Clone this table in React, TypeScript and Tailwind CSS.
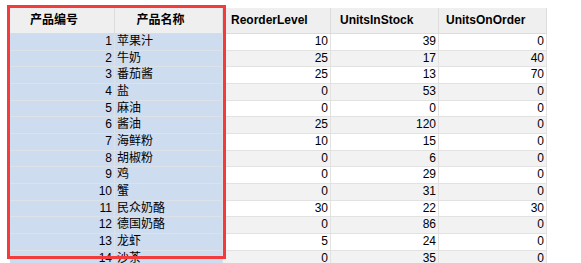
import React from "react";

const rows: [number, string, number, number, number][] = [
  [1, "苹果汁", 10, 39, 0],
  [2, "牛奶", 25, 17, 40],
  [3, "番茄酱", 25, 13, 70],
  [4, "盐", 0, 53, 0],
  [5, "麻油", 0, 0, 0],
  [6, "酱油", 25, 120, 0],
  [7, "海鲜粉", 10, 15, 0],
  [8, "胡椒粉", 0, 6, 0],
  [9, "鸡", 0, 29, 0],
  [10, "蟹", 0, 31, 0],
  [11, "民众奶酪", 30, 22, 30],
  [12, "德国奶酪", 0, 86, 0],
  [13, "龙虾", 5, 24, 0],
  [14, "沙茶", 0, 35, 0],
  [15, "味精", 0, 39, 0],
];

export default function App() {
  return (
    <div
      className="relative w-[581px] h-[263px] overflow-hidden bg-white text-[12px] text-black"
      style={{ fontFamily: '"Liberation Sans", "Noto Sans CJK SC", Arial, sans-serif' }}
    >
      <div className="pt-[8px] pl-[10px]">
        <div className="w-[537px]">
          <div className="flex h-[26px] bg-[#efefef] border-b border-[#dcdcdc] font-bold leading-[25px]">
            <div className="w-[105px] border-r border-[#dcdcdc] pr-[16px] text-center">产品编号</div>
            <div className="w-[108px] border-r border-[#dcdcdc] pr-[16px] text-center">产品名称</div>
            <div className="w-[108px] border-r border-[#dcdcdc] pl-[8px]">ReorderLevel</div>
            <div className="w-[108px] border-r border-[#dcdcdc] pl-[9px]">UnitsInStock</div>
            <div className="w-[108px] border-r border-[#dcdcdc] pl-[7px]">UnitsOnOrder</div>
          </div>
          {rows.map(([id, name, a, b, c]) => {
            const even = id % 2 === 0;
            const bg = even ? "bg-[#f2f2f2]" : "bg-white";
            return (
              <div key={id} className="flex h-[16.667px] leading-[15.6px]">
                <div className="w-[105px] bg-[#cedcef] border-r border-b border-[#dde1e8] pr-[2px] text-right">{id}</div>
                <div className="w-[108px] bg-[#cedcef] border-r border-b border-[#dde1e8] pl-[2px]">{name}</div>
                <div className={`w-[108px] ${bg} border-r border-b border-[#e2e2e2] pr-[2px] text-right`}>{a}</div>
                <div className={`w-[108px] ${bg} border-r border-b border-[#e2e2e2] pr-[2px] text-right`}>{b}</div>
                <div className={`w-[108px] ${bg} border-r border-b border-[#e2e2e2] pr-[2px] text-right`}>{c}</div>
              </div>
            );
          })}
        </div>
      </div>
      <div className="absolute left-[7px] top-[5px] w-[219px] h-[254px] border-[3px] border-[#f43b3b]" />
    </div>
  );
}
